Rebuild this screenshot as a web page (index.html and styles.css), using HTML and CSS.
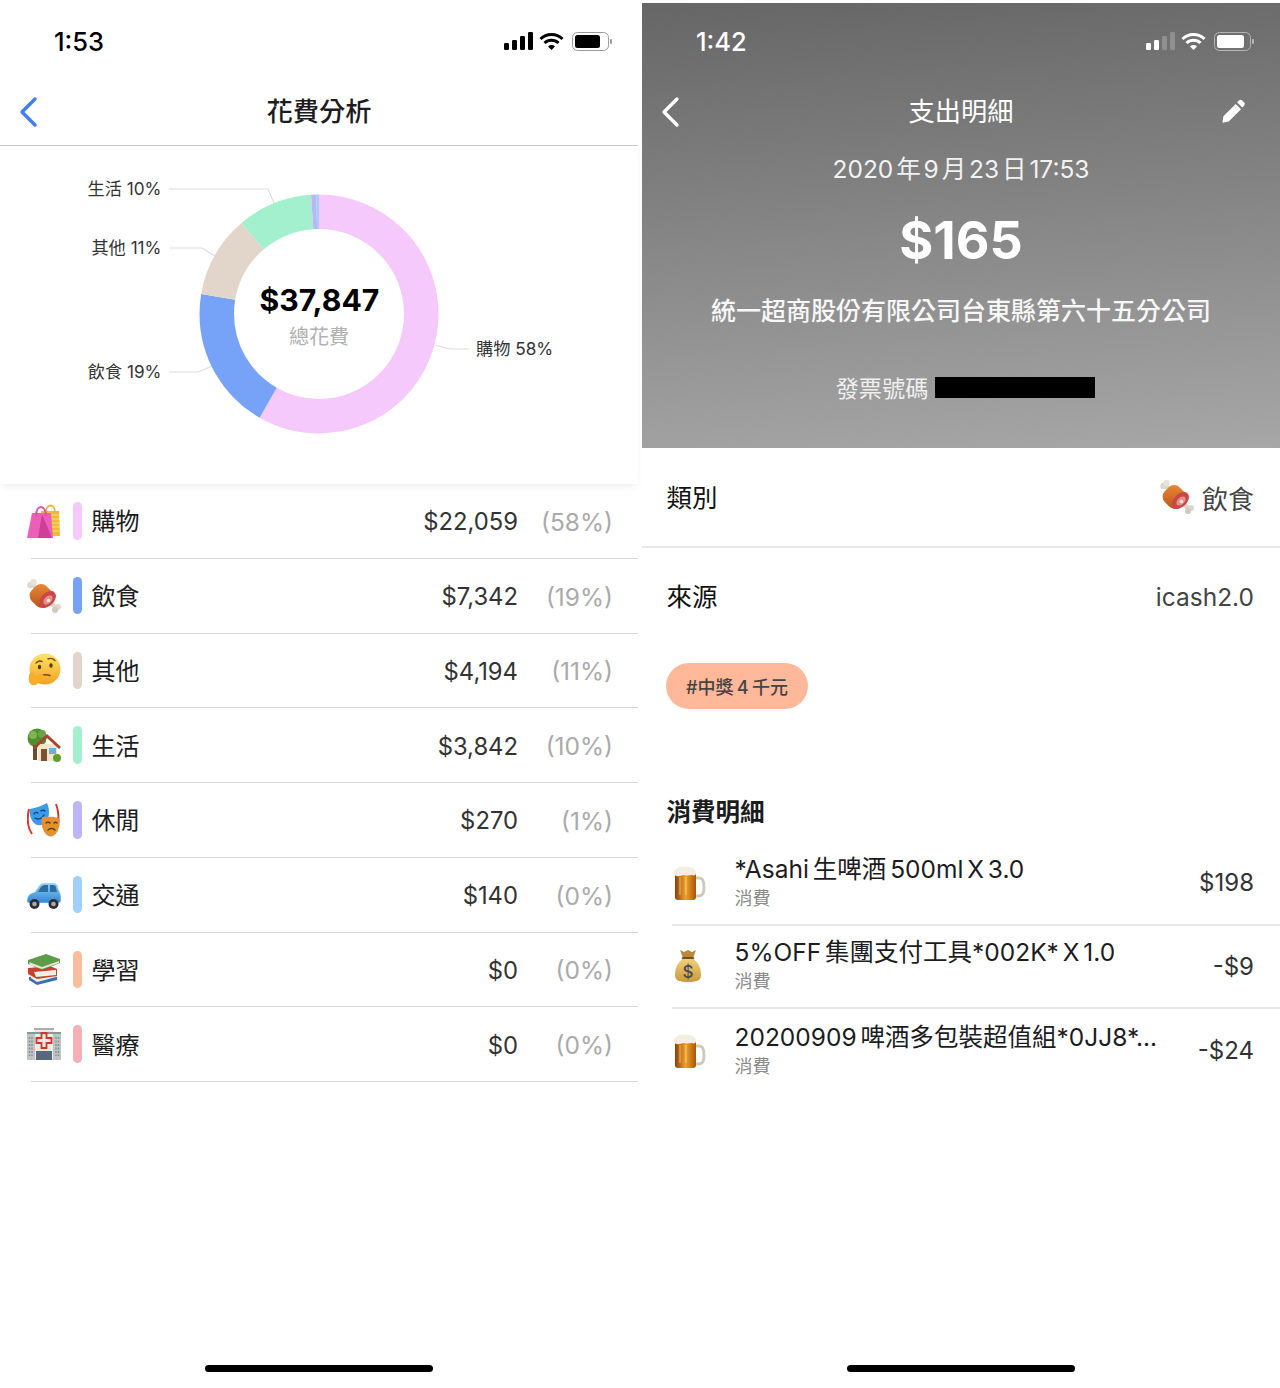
FILE: index.html
```html
<!DOCTYPE html>
<html lang="zh-Hant">
<head>
<meta charset="utf-8">
<title>花費分析</title>
<link rel="stylesheet" href="styles.css">
</head>
<body>
<svg class="sprite" aria-hidden="true">
  <defs>
    <linearGradient id="gFace" x1="0" y1="0" x2="0" y2="1"><stop offset="0" stop-color="#ffe36b"/><stop offset="1" stop-color="#f2a21f"/></linearGradient>
    <linearGradient id="gBeer" x1="0" y1="0" x2="1" y2="0"><stop offset="0" stop-color="#8a3f0a"/><stop offset=".5" stop-color="#f0a22c"/><stop offset="1" stop-color="#a8540f"/></linearGradient>
    <linearGradient id="gMeat" x1="0" y1="0" x2="1" y2="1"><stop offset="0" stop-color="#ee8f38"/><stop offset="1" stop-color="#b84c16"/></linearGradient>
    <linearGradient id="gCar" x1="0" y1="0" x2="0" y2="1"><stop offset="0" stop-color="#8fd0f7"/><stop offset="1" stop-color="#2f86d3"/></linearGradient>
    <linearGradient id="gBag" x1="0" y1="0" x2="0" y2="1"><stop offset="0" stop-color="#f0cf78"/><stop offset="1" stop-color="#c99a3c"/></linearGradient>

    <symbol id="i-bags" viewBox="0 0 34 34">
      <path d="M14 7h18l1 25H14z" fill="#f0b93a"/>
      <path d="M17 11h15M17 15h15M17 19h16M17 23h16M17 27h16" stroke="#e8d762" stroke-width="1.600"/>
      <path d="M19 9c0-10 9-10 9 0" fill="none" stroke="#e8b640" stroke-width="1.800"/>
      <path d="M5 9h19l2 25H0z" fill="#ec5fb8"/>
      <path d="M15 10l-4 24h14z" fill="#cf3f99"/>
      <path d="M9 12C9 0 19 0 19 12" fill="none" stroke="#e54aa9" stroke-width="1.800"/>
    </symbol>
    <symbol id="i-meat" viewBox="0 0 34 34">
      <path d="M5 5L29 29" stroke="#d9d5c9" stroke-width="4.500"/>
      <circle cx="3.500" cy="6" r="3.200" fill="#dcd8cc"/><circle cx="6.500" cy="3.200" r="3.200" fill="#e6e2d8"/>
      <circle cx="31" cy="28" r="3" fill="#dcd8cc"/><circle cx="28" cy="31" r="3" fill="#cfcabd"/>
      <rect x="3.500" y="6.500" width="22" height="21" rx="8" transform="rotate(45 14.500 17)" fill="url(#gMeat)"/>
      <ellipse cx="20.500" cy="20.500" rx="6.500" ry="10" transform="rotate(45 20.500 20.500)" fill="#c8474a"/>
      <ellipse cx="21" cy="21" rx="3.500" ry="5.500" transform="rotate(45 21 21)" fill="#e88f8a"/>
      <circle cx="21.500" cy="21.500" r="1.800" fill="#f4ead8"/>
    </symbol>
    <symbol id="i-think" viewBox="0 0 34 34">
      <circle cx="18" cy="16" r="15.500" fill="url(#gFace)"/>
      <path d="M9 10c2-2 4-2.500 6-1.500M21 6c2-1 5-.5 7 1.500" fill="none" stroke="#7a4a12" stroke-width="1.400" stroke-linecap="round"/>
      <ellipse cx="12.500" cy="14" rx="1.700" ry="2.200" fill="#5b3a10"/>
      <ellipse cx="24" cy="12.500" rx="1.700" ry="2.200" fill="#5b3a10"/>
      <path d="M14 22.500c3-1 6-1 9 0" fill="none" stroke="#7a4a12" stroke-width="1.500" stroke-linecap="round"/>
      <path d="M3 20c2-1 4 0 5 3l7-2c2 0 2 3 0 3l-3 1c2 0 2 3 0 3-1 4-5 5-7 4-4-2-4-8-2-12z" fill="#f7ae2c"/>
    </symbol>
    <symbol id="i-home" viewBox="0 0 34 34">
      <circle cx="10" cy="10" r="9.500" fill="#4f8f2e"/>
      <circle cx="6" cy="7" r="4" fill="#7cb552"/>
      <circle cx="15" cy="6" r="4" fill="#6aa544"/>
      <rect x="6" y="17" width="4" height="15" fill="#6d4a2a"/>
      <path d="M11 16h19v17H11z" fill="#f3e6c8"/>
      <path d="M6 19L20 6l14 13-2 2-12-11L8 21z" fill="#a5452f"/>
      <rect x="14" y="21" width="6" height="12" fill="#7a5030"/>
      <rect x="22" y="20" width="7" height="6" fill="#6db0dc"/>
      <circle cx="30" cy="30" r="4" fill="#5d9e35"/>
    </symbol>
    <symbol id="i-masks" viewBox="0 0 34 34">
      <path d="M2 6c-2 9-2 18 3 25M29 1c3 8 3 15 1 20" fill="none" stroke="#d23a2c" stroke-width="2"/>
      <path d="M3 6c6-1 12-3 17-6 3 6 3 15-2 20-3 3-8 3-11 0C4 17 2 11 3 6z" fill="#3b9be8"/>
      <path d="M7 11c1-2 3-2 4-1M14 8c1-1 3-1 4 0M8 15c3 2 7 1 9-3" fill="none" stroke="#123e7a" stroke-width="1.300" stroke-linecap="round"/>
      <path d="M15 14c5 0 13-1 18 2 0 8-2 14-7 17-3 1-6 0-8-3-3-4-4-10-3-16z" fill="#e2932e"/>
      <path d="M19 20c1-1 3-1 4 0M27 20c1-1 2-1 3 0M21 27c2-2 5-2 7 0" fill="none" stroke="#5d320c" stroke-width="1.300" stroke-linecap="round"/>
    </symbol>
    <symbol id="i-car" viewBox="0 0 34 34">
      <path d="M0 23c0-5 3-8 8-9l4-6c1-2 3-3 6-3h8c3 0 5 2 5 5l2 5c1 2 1 4 1 7 0 2-1 3-3 3H2c-1 0-2-1-2-2z" fill="url(#gCar)" stroke="#dfe9ef" stroke-width=".6"/>
      <path d="M11 14l3-5c1-1 2-2 4-2h3v7zM23 7h3c2 0 3 1 3 3l1 4h-7z" fill="#2a6d9e"/>
      <circle cx="7.500" cy="26" r="5" fill="#2e2e30"/><circle cx="7.500" cy="26" r="2.300" fill="#a9adb1"/>
      <circle cx="26.500" cy="26" r="5" fill="#2e2e30"/><circle cx="26.500" cy="26" r="2.300" fill="#a9adb1"/>
    </symbol>
    <symbol id="i-books" viewBox="0 0 34 34">
      <path d="M2 25l20-3 8 3v3l-20 5-8-5z" fill="#3e6fb0"/>
      <path d="M4 24l24-1 1 2-19 5-6-4z" fill="#f2efe6"/>
      <path d="M1 16l22-2 7 3v7l-20 3-9-5z" fill="#c9402f"/>
      <path d="M7 20l22-2v5l-20 2z" fill="#f2efe6"/>
      <path d="M1 8l18-6 14 5v4L15 18 1 12z" fill="#5f9c4a"/>
      <path d="M2 10l13 5 17-6v2L15 17 3 13z" fill="#e9e5da"/>
    </symbol>
    <symbol id="i-hosp" viewBox="0 0 34 34">
      <rect x="0" y="6" width="34" height="27" fill="#bfc3c4"/>
      <rect x="8" y="1" width="18" height="32" fill="#eceae4"/>
      <rect x="7" y="1" width="20" height="2" fill="#a9adae"/>
      <rect x="0" y="5" width="34" height="2" fill="#8f9496"/>
      <path d="M14.500 6h5v5h5v5h-5v5h-5v-5h-5v-5h5z" fill="none" stroke="#d0342c" stroke-width="1.800"/>
      <rect x="9" y="24" width="16" height="9" fill="#54697a"/>
      <path d="M2.500 10v19M5 10v19M29 10v19M31.500 10v19" stroke="#7d8f99" stroke-width="1.300" stroke-dasharray="2 1.500"/>
    </symbol>
    <symbol id="i-beer" viewBox="0 0 34 34">
      <path d="M23 12h4c4 0 5 3 5 9s-1 9-5 9h-4" fill="none" stroke="#cfcabb" stroke-width="3"/>
      <path d="M3 7h21v24c0 2-1 3-3 3H6c-2 0-3-1-3-3z" fill="url(#gBeer)"/>
      <path d="M8 11v18M14 11v18" stroke="#ffd27a" stroke-width="1.400" opacity=".6"/>
      <path d="M2 7c0-4 5-7 10-6 5-1 11 1 12 5 1 3-2 4-4 3-3 0-5 1-8 0-3 0-4 2-7 1-2 0-3-1-3-3z" fill="#f4eee2"/>
    </symbol>
    <symbol id="i-money" viewBox="0 0 34 34">
      <path d="M8 1l4 2 4-2 4 2 4-2-3 8H11z" fill="#b68a3a"/>
      <rect x="10" y="8" width="12" height="2.500" rx="1" fill="#6f5120"/>
      <path d="M11 10C5 14 3 20 3 26c0 5 3 7 13 7s13-2 13-7c0-6-2-12-8-16z" fill="url(#gBag)"/>
      <text class="money-sign" x="16" y="29" text-anchor="middle">$</text>
    </symbol>
  </defs>
</svg>

<main class="screens">
  <section class="screen">
    <header class="status">
      <span class="time">1:53</span>
      <svg class="status-icons" viewBox="0 0 108 20" width="108" height="20">
        <rect x="0" y="12" width="5" height="7" rx="1.200" fill="#000"/><rect x="8" y="9" width="5" height="10" rx="1.200" fill="#000"/><rect x="16" y="5" width="5" height="14" rx="1.200" fill="#000"/><rect x="24" y="1" width="5" height="18" rx="1.200" fill="#000"/>
        <path d="M36.500 8a16 16 0 0 1 22 0M40.500 12a10 10 0 0 1 14 0" fill="none" stroke="#000" stroke-width="3"/><path d="M44 15.500a5 5 0 0 1 7 0L47.500 19z" fill="#000"/>
        <rect x="68.500" y="1.500" width="36" height="18" rx="5" fill="none" stroke="#9a9a9a"/><rect x="71" y="4" width="25" height="13" rx="2.500" fill="#000"/><rect x="106" y="8" width="2" height="5" rx="1" fill="#9a9a9a"/>
      </svg>
    </header>
    <nav class="nav nav-light">
      <svg class="back" viewBox="0 0 20 32" width="20" height="32"><path d="M17 3L4 16l13 13" fill="none" stroke="#3f7ff0" stroke-width="3.400" stroke-linecap="round" stroke-linejoin="round"/></svg>
      <h1 class="nav-title">花費分析</h1>
    </nav>
    <div class="chart">
      <svg class="chart-svg" viewBox="0 0 638 338" width="638" height="338">
        <g class="leaders">
          <path d="M169 43H268L274 57"/>
          <path d="M169 102H202L215 110"/>
          <path d="M169 226H198L212 220"/>
          <path d="M435 199L450 203H469"/>
        </g>
        <g class="donut" transform="rotate(-90 319 168)">
          <circle cx="319" cy="168" r="102.250" pathLength="100" stroke="#f5c9fb" stroke-dasharray="58.285 41.715" stroke-dashoffset="0"/>
          <circle cx="319" cy="168" r="102.250" pathLength="100" stroke="#76a2f8" stroke-dasharray="19.399 80.601" stroke-dashoffset="-58.285"/>
          <circle cx="319" cy="168" r="102.250" pathLength="100" stroke="#e2d5ca" stroke-dasharray="11.081 88.919" stroke-dashoffset="-77.684"/>
          <circle cx="319" cy="168" r="102.250" pathLength="100" stroke="#a2f0cd" stroke-dasharray="10.151 89.849" stroke-dashoffset="-88.765"/>
          <circle cx="319" cy="168" r="102.250" pathLength="100" stroke="#beb4f8" stroke-dasharray="0.713 99.287" stroke-dashoffset="-98.916"/>
          <circle cx="319" cy="168" r="102.250" pathLength="100" stroke="#a0cffc" stroke-dasharray="0.371 99.629" stroke-dashoffset="-99.629"/>
        </g>
        <text class="label" x="161.500" y="49" text-anchor="end">生活 10%</text>
        <text class="label" x="161.500" y="108" text-anchor="end">其他 11%</text>
        <text class="label" x="161.500" y="232" text-anchor="end">飲食 19%</text>
        <text class="label" x="476" y="209">購物 58%</text>
        <text class="total" x="319.500" y="164.500" text-anchor="middle">$37,847</text>
        <text class="total-sub" x="319" y="197.500" text-anchor="middle">總花費</text>
      </svg>
    </div>
    <ul class="cats">
      <li class="cat"><svg class="emoji"><use href="#i-bags"/></svg><i class="bar bar-shop"></i><span class="cat-name">購物</span><span class="cat-amount">$22,059</span><span class="cat-pct">(58%)</span></li>
      <li class="cat"><svg class="emoji"><use href="#i-meat"/></svg><i class="bar bar-food"></i><span class="cat-name">飲食</span><span class="cat-amount">$7,342</span><span class="cat-pct">(19%)</span></li>
      <li class="cat"><svg class="emoji"><use href="#i-think"/></svg><i class="bar bar-other"></i><span class="cat-name">其他</span><span class="cat-amount">$4,194</span><span class="cat-pct">(11%)</span></li>
      <li class="cat"><svg class="emoji"><use href="#i-home"/></svg><i class="bar bar-life"></i><span class="cat-name">生活</span><span class="cat-amount">$3,842</span><span class="cat-pct">(10%)</span></li>
      <li class="cat"><svg class="emoji"><use href="#i-masks"/></svg><i class="bar bar-fun"></i><span class="cat-name">休閒</span><span class="cat-amount">$270</span><span class="cat-pct">(1%)</span></li>
      <li class="cat"><svg class="emoji"><use href="#i-car"/></svg><i class="bar bar-car"></i><span class="cat-name">交通</span><span class="cat-amount">$140</span><span class="cat-pct">(0%)</span></li>
      <li class="cat"><svg class="emoji"><use href="#i-books"/></svg><i class="bar bar-learn"></i><span class="cat-name">學習</span><span class="cat-amount">$0</span><span class="cat-pct">(0%)</span></li>
      <li class="cat"><svg class="emoji"><use href="#i-hosp"/></svg><i class="bar bar-med"></i><span class="cat-name">醫療</span><span class="cat-amount">$0</span><span class="cat-pct">(0%)</span></li>
    </ul>
    <div class="home-bar"></div>
  </section>

  <section class="screen screen-right">
    <div class="hero">
      <header class="status status-dark">
        <span class="time">1:42</span>
        <svg class="status-icons" viewBox="0 0 108 20" width="108" height="20">
          <rect x="0" y="12" width="5" height="7" rx="1.200" fill="#fff"/><rect x="8" y="9" width="5" height="10" rx="1.200" fill="#fff"/><rect x="16" y="5" width="5" height="14" rx="1.200" fill="#8f8f8f"/><rect x="24" y="1" width="5" height="18" rx="1.200" fill="#8f8f8f"/>
          <path d="M36.500 8a16 16 0 0 1 22 0M40.500 12a10 10 0 0 1 14 0" fill="none" stroke="#fff" stroke-width="3"/><path d="M44 15.500a5 5 0 0 1 7 0L47.500 19z" fill="#fff"/>
          <rect x="68.500" y="1.500" width="36" height="18" rx="5" fill="none" stroke="#b5b5b5"/><rect x="71" y="4" width="27" height="13" rx="2.500" fill="#fff"/><rect x="106" y="8" width="2" height="5" rx="1" fill="#b5b5b5"/>
        </svg>
      </header>
      <nav class="nav nav-dark">
        <svg class="back" viewBox="0 0 20 32" width="20" height="32"><path d="M17 3L4 16l13 13" fill="none" stroke="#fff" stroke-width="3.400" stroke-linecap="round" stroke-linejoin="round"/></svg>
        <h1 class="nav-title">支出明細</h1>
        <svg class="pencil" viewBox="0 0 26 26" width="25" height="25"><path d="M18.500 2.500c1-1 2.500-1 3.500 0l2 2c1 1 1 2.500 0 3.500l-1.800 1.800-5.500-5.500zM15.300 6.200l5.500 5.500L8 24.500l-6.500 1.200L2.500 19z" fill="#fff"/></svg>
      </nav>
      <p class="hero-date">2020 年 9 月 23 日 17:53</p>
      <p class="hero-amount">$165</p>
      <p class="hero-shop">統一超商股份有限公司台東縣第六十五分公司</p>
      <div class="invoice"><span class="invoice-label">發票號碼</span><span class="invoice-mask"></span></div>
    </div>
    <div class="field field-line"><span class="field-name">類別</span><span class="field-value field-cat"><svg class="emoji emoji-field"><use href="#i-meat"/></svg>飲食</span></div>
    <div class="field field-plain"><span class="field-name">來源</span><span class="field-value field-source">icash2.0</span></div>
    <div class="tag">#中獎 4 千元</div>
    <h2 class="section-title">消費明細</h2>
    <ul class="items">
      <li class="item"><svg class="emoji"><use href="#i-beer"/></svg><div class="item-text"><span class="item-title">*Asahi 生啤酒 500ml X 3.0</span><span class="item-sub">消費</span></div><span class="item-price">$198</span></li>
      <li class="item"><svg class="emoji"><use href="#i-money"/></svg><div class="item-text"><span class="item-title">5%OFF 集團支付工具*002K* X 1.0</span><span class="item-sub">消費</span></div><span class="item-price">-$9</span></li>
      <li class="item"><svg class="emoji"><use href="#i-beer"/></svg><div class="item-text"><span class="item-title">20200909 啤酒多包裝超值組*0JJ8*...</span><span class="item-sub">消費</span></div><span class="item-price">-$24</span></li>
    </ul>
    <div class="home-bar"></div>
  </section>
</main>
</body>
</html>
```
FILE: styles.css
```css
* { box-sizing: border-box; }
html, body { margin: 0; padding: 0; background: #fff; }
body {
  width: 1280px;
  height: 1388px;
  overflow: hidden;
  color: #1c1c1e;
  font-family: Inter, "Noto Sans CJK TC", sans-serif;
}
ul { list-style: none; margin: 0; padding: 0; }
h1, h2, p { margin: 0; font-weight: 400; }

.sprite { position: absolute; width: 0; height: 0; }

.screens {
  display: grid;
  grid-template-columns: 638px 638px;
  column-gap: 4px;
  height: 1388px;
}
.screen { display: flex; flex-direction: column; height: 1388px; min-width: 0; }
.screen-right { padding-top: 3px; }

.status {
  display: flex;
  align-items: center;
  justify-content: space-between;
  height: 78px;
  padding: 4px 26px 0 54px;
  color: #000;
}
.status-dark { height: 75px; padding-top: 1px; color: #fff; }
.time { font-size: 25.500px; font-weight: 500; }
.status-icons { display: block; }

.nav {
  display: flex;
  align-items: center;
  justify-content: space-between;
  position: relative;
  height: 68px;
  padding: 0 26px 0 18px;
}
.nav-light { border-bottom: 1px solid #c8c8c8; }
.nav-dark { color: #fff; }
.nav-title {
  position: absolute;
  top: 0;
  left: 0; right: 0;
  text-align: center;
  font-size: 26.250px;
  line-height: 67px;
  font-weight: 500;
}
.nav-dark .nav-title { font-weight: 400; }
.pencil { margin-right: 8px; margin-top: -3px; }

.chart { height: 338px; box-shadow: 0 4px 8px -2px rgba(0,0,0,.08); position: relative; }
.chart-svg { display: block; }
.leaders path { fill: none; stroke: #dedede; stroke-width: 1.200; }
.donut circle { fill: none; stroke-width: 34.500; }
.label { font-size: 17.200px; fill: #333; }
.total { font-size: 30.200px; font-weight: 700; fill: #000; }
.total-sub { font-size: 20px; fill: #b0b0b0; }

.cats { display: flex; flex-direction: column; }
.cat {
  display: flex;
  align-items: center;
  height: 74.750px;
  margin-left: 31px;
  padding-right: 25px;
  border-bottom: 1px solid #d6d6d6;
}
.emoji { width: 34px; height: 34px; flex: none; }
.cat .emoji { margin-left: -4px; }
.bar { display: block; width: 9px; height: 37.500px; border-radius: 5px; margin-left: 12px; flex: none; }
.bar-shop { background: #f5c9fb; }
.bar-food { background: #76a2f8; }
.bar-other { background: #e2d5ca; }
.bar-life { background: #a2f0cd; }
.bar-fun { background: #beb4f8; }
.bar-car { background: #a0cffc; }
.bar-learn { background: #f7bd9c; }
.bar-med { background: #f5b0b4; }
.cat-name { margin: 0 0 2px 9.500px; font-size: 24px; color: #1c1c1e; }
.cat-amount { margin: 2px 0 0 auto; font-size: 23.800px; color: #333; }
.cat-pct { width: 95px; margin-top: 2px; text-align: right; font-size: 24.500px; color: #aaa; }

.home-bar {
  width: 228px;
  height: 7px;
  margin: auto auto 16px;
  border-radius: 4px;
  background: #000;
  flex: none;
}

.hero {
  height: 445px;
  color: #fff;
  background: linear-gradient(176deg, #666 0%, #a7a7a7 100%);
}
.hero-date { margin-top: 5px; text-align: center; font-size: 24.500px; line-height: 36px; word-spacing: -4px; color: #f2f2f2; }
.hero-amount { margin-top: 22px; text-align: center; font-size: 52px; line-height: 64px; font-weight: 700; }
.hero-shop { margin-top: 20px; text-align: center; font-size: 25px; line-height: 36px; font-weight: 500; color: #f7f7f7; }
.invoice { display: flex; align-items: center; justify-content: center; gap: 7px; margin-top: 42px; padding-left: 9px; height: 32px; }
.invoice-label { font-size: 23.200px; color: #f0f0f0; }
.invoice-mask { width: 160px; height: 21px; background: #000; }

.field {
  display: flex;
  align-items: center;
  justify-content: space-between;
  padding: 0 26px 0 24.500px;
}
.field-line { height: 100px; border-bottom: 2px solid #e8e8e8; }
.field-plain { height: 96px; }
.field-name { margin-bottom: 3px; font-size: 25.500px; color: #111; }
.field-value { display: flex; align-items: center; gap: 8px; font-size: 25px; color: #444; }
.field-cat { font-size: 26px; }
.field-source { margin-top: 2px; font-size: 24.500px; }
.emoji-field { width: 34px; height: 34px; }

.tag {
  align-self: flex-start;
  display: flex;
  align-items: center;
  justify-content: center;
  width: 142px;
  height: 46px;
  margin: 19px 0 0 24px;
  border-radius: 23px;
  background: #ffb899;
  color: #444;
  font-size: 18px;
  font-weight: 500;
  word-spacing: -1.500px;
}
.section-title { margin: 86px 0 0 24.500px; font-size: 24.500px; line-height: 34px; font-weight: 700; color: #1c1c1e; }

.items { display: flex; flex-direction: column; margin-top: 13px; }
.item {
  display: flex;
  align-items: center;
  height: 83.500px;
  margin-left: 30px;
  padding-right: 26px;
  border-bottom: 2px solid #e8e8e8;
}
.item:last-child { border-bottom: 0; }
.item-text { display: flex; flex-direction: column; margin-left: 28.500px; }
.item-title { font-size: 24.500px; line-height: 29px; word-spacing: -3px; color: #1c1c1e; }
.item-sub { margin-top: 2px; font-size: 18px; line-height: 25px; color: #8a8a8a; }
.item-price { margin-left: auto; font-size: 24px; color: #333; }
.money-sign { font-size: 17px; font-weight: 500; fill: #4a4a5a; }
```
